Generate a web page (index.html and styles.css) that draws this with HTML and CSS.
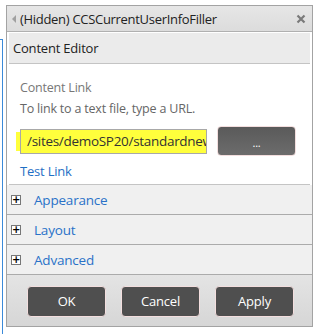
FILE: index.html
```html
<!DOCTYPE html>
<html lang="en">
<head>
  <meta charset="UTF-8" />
  <title>Web Part Tool Pane</title>
  <link rel="stylesheet" href="styles.css">
</head>
<body>

  <div class="page-edge"></div>

  <div class="toolpane">
    <div class="title-bar">
      <span class="arrow"></span>
      <span class="title">(Hidden) CCSCurrentUserInfoFiller</span>
      <svg class="close" width="10" height="10" viewBox="0 0 10 10">
        <path d="M1.5 1.5 L8.5 8.5 M8.5 1.5 L1.5 8.5" stroke="#7a7a7a" stroke-width="2.2"/>
      </svg>
    </div>

    <div class="editor">
      <div class="editor-header">Content Editor</div>
      <div class="editor-body">
        <div class="field-label">Content Link</div>
        <div class="field-hint">To link to a text file, type a URL.</div>
        <div class="link-row">
          <div class="link-input">/sites/demoSP20/standardnew</div>
          <button class="btn btn-browse">...</button>
        </div>
        <a class="test-link" href="#">Test Link</a>
      </div>
    </div>

    <div class="section"><span class="plus">+</span><span class="section-name">Appearance</span></div>
    <div class="section"><span class="plus">+</span><span class="section-name">Layout</span></div>
    <div class="section"><span class="plus">+</span><span class="section-name">Advanced</span></div>

    <div class="footer">
      <button class="btn">OK</button>
      <button class="btn">Cancel</button>
      <button class="btn">Apply</button>
    </div>
  </div>

</body>
</html>
```

FILE: styles.css
```css
* {
  box-sizing: border-box;
  margin: 0;
  padding: 0;
}

body {
  font-family: 'Open Sans', 'Noto Sans', sans-serif;
  background: #fff;
  color: #444;
  position: relative;
  height: 334px;
  overflow: hidden;
}

.page-edge {
  position: absolute;
  left: -1px;
  top: 39px;
  width: 4px;
  bottom: 0;
  border-top: 1px solid #3b8ad9;
  border-right: 1px solid #3b8ad9;
}

.toolpane {
  margin: 5px 0 0 6px;
  width: 307px;
  border: 1px solid #a3a3a3;
  background: #fff;
}

.title-bar {
  height: 26px;
  display: flex;
  align-items: center;
  padding: 0 6px 0 5px;
  background: linear-gradient(#e6e6e6, #dcdcdc);
  border-bottom: 1px solid #b0b0b0;
}

.arrow {
  width: 0;
  height: 0;
  border-top: 4px solid transparent;
  border-bottom: 4px solid transparent;
  border-right: 4px solid #a0a0a0;
  margin-right: 4px;
}

.title {
  font-size: 13px;
  color: #222;
  flex: 1;
  letter-spacing: -0.3px;
}

.close {
  margin-top: 1px;
}

.editor {
  padding: 1px 2px 0;
}

.editor-header {
  height: 31px;
  line-height: 30px;
  padding-left: 4px;
  background: #ebebeb;
  border-bottom: 1px solid #c4c4c4;
  font-size: 13px;
  color: #222;
  letter-spacing: -0.2px;
}

.editor-body {
  padding: 14px 0 3px 11px;
  border-bottom: 1px solid #c4c4c4;
  font-size: 12.5px;
  letter-spacing: -0.2px;
}

.field-label {
  color: #777;
  line-height: 20px;
}

.field-hint {
  color: #666;
  line-height: 20px;
  margin-top: 1px;
}

.link-row {
  display: flex;
  align-items: center;
  margin-top: 7px;
  height: 30px;
}

.link-input {
  width: 187px;
  height: 25px;
  border: 1px solid #a8a8a8;
  background: #ffff3c;
  box-shadow: -7px 0 0 -3px #ffff3c;
  overflow: hidden;
  white-space: nowrap;
  padding-left: 6px;
  line-height: 23px;
  color: #333;
  font-size: 13.5px;
  letter-spacing: -0.3px;
}

.btn {
  font-family: 'Open Sans', 'Noto Sans', sans-serif;
  width: 79px;
  height: 31px;
  border: 1px solid #f3dede;
  border-radius: 4px;
  background: #4f4f4f;
  color: #fff;
  font-size: 13px;
  letter-spacing: -0.2px;
  cursor: pointer;
}

.btn-browse {
  margin-left: 10px;
  height: 30px;
  background: linear-gradient(#5a5a5a, #6c6c6c);
  font-size: 11px;
  padding-top: 2px;
}

.test-link {
  display: block;
  margin-top: 5px;
  color: #1f6fc5;
  text-decoration: none;
  line-height: 20px;
  font-size: 13px;
}

.section {
  height: 30px;
  display: flex;
  align-items: center;
  padding-left: 4px;
  background: #f0f0f0;
  border-bottom: 1px solid #ababab;
}

.section:first-of-type {
  margin-top: 1px;
}

.plus {
  width: 10px;
  height: 10px;
  border: 1px solid #777;
  background: #fff;
  color: #000;
  font-size: 10px;
  line-height: 7px;
  text-align: center;
  font-family: 'DejaVu Sans', sans-serif;
  font-weight: bold;
}

.section-name {
  margin-left: 13px;
  color: #2a72c8;
  font-size: 13.5px;
  letter-spacing: -0.2px;
}

.footer {
  height: 51px;
  display: flex;
  align-items: center;
  gap: 15px;
  padding: 1px 0 0 20px;
  background: linear-gradient(#e4e4e4, #d6d6d6);
}
```
